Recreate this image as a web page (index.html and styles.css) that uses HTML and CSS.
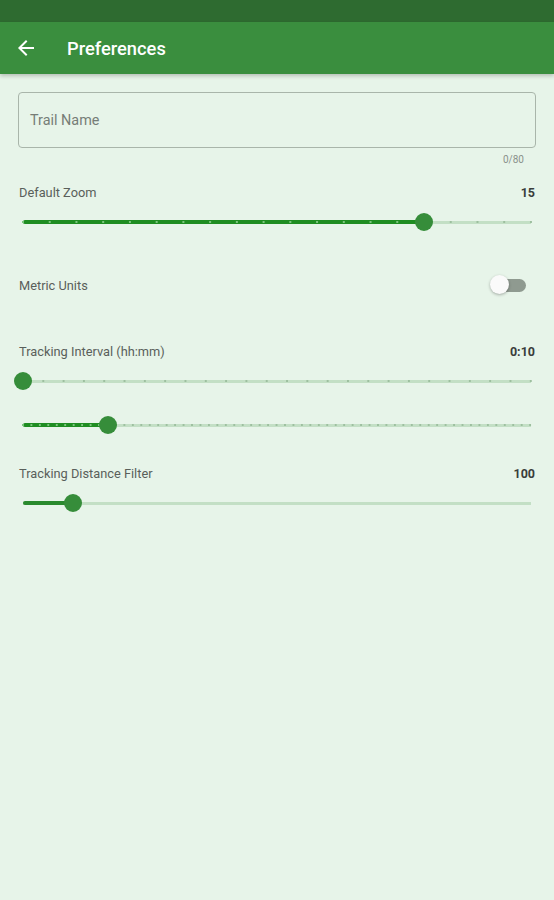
FILE: index.html
```html
<!DOCTYPE html>
<html lang="en">
<head>
<meta charset="utf-8">
<title>Preferences</title>
<link rel="stylesheet" href="styles.css">
</head>
<body>
<div class="status"></div>
<header class="appbar">
  <svg class="back" viewBox="0 0 24 24" width="24" height="24"><path d="M20 11H7.83l5.59-5.59L12 4l-8 8 8 8 1.41-1.41L7.83 13H20v-2z" fill="#fff"/></svg>
  <h1 class="title">Preferences</h1>
</header>
<main class="content">
  <div class="field"><span class="placeholder">Trail Name</span></div>
  <div class="counter">0/80</div>

  <div class="row label-row r1"><span class="label">Default Zoom</span><span class="value">15</span></div>
  <div class="slider">
    <div class="track" style="--p:78.95%; --n:19">
      <div class="inactive"></div>
      <div class="active"></div>
      <div class="ticks ticks-in"></div>
      <div class="ticks ticks-act"></div>
      <div class="thumb"></div>
    </div>
  </div>

  <div class="row switch-row"><span class="label">Metric Units</span>
    <span class="switch"><span class="switch-track"></span><span class="switch-thumb"></span></span>
  </div>

  <div class="row label-row r2"><span class="label">Tracking Interval (hh:mm)</span><span class="value">0:10</span></div>
  <div class="slider">
    <div class="track" style="--p:0%; --n:25">
      <div class="inactive"></div>
      <div class="active"></div>
      <div class="ticks ticks-in"></div>
      <div class="ticks ticks-act"></div>
      <div class="thumb"></div>
    </div>
  </div>
  <div class="slider s3">
    <div class="track" style="--p:16.67%; --n:60">
      <div class="inactive"></div>
      <div class="active"></div>
      <div class="ticks ticks-in"></div>
      <div class="ticks ticks-act"></div>
      <div class="thumb"></div>
    </div>
  </div>

  <div class="row label-row r3"><span class="label">Tracking Distance Filter</span><span class="value">100</span></div>
  <div class="slider">
    <div class="track plain" style="--p:9.84%">
      <div class="inactive"></div>
      <div class="active"></div>
      <div class="thumb"></div>
    </div>
  </div>
</main>
</body>
</html>
```
FILE: styles.css
```css
html, body {
  margin: 0;
  padding: 0;
}
body {
  background: #e7f4e9;
  font-family: Roboto, "Noto Sans", "Liberation Sans", sans-serif;
  height: 900px;
  overflow: hidden;
}
.status {
  height: 22px;
  background: #2e6b30;
}
.appbar {
  height: 52px;
  background: #3a8e3e;
  display: flex;
  align-items: center;
  box-shadow: 0 2px 4px rgba(0, 0, 0, 0.22);
  position: relative;
}
.back {
  margin-left: 14px;
  display: block;
}
.title {
  margin: 0 0 0 29px;
  color: #fff;
  font-size: 18.3px;
  font-weight: 500;
  letter-spacing: 0;
}
.content {
  padding: 18px 18px 0 18px;
  display: flex;
  flex-direction: column;
}
.field {
  height: 54px;
  border: 1px solid #a9b5aa;
  border-radius: 4px;
  display: flex;
  align-items: center;
  padding-left: 11px;
}
.placeholder {
  color: #767d77;
  font-size: 14.4px;
}
.counter {
  margin-top: 4px;
  height: 16px;
  line-height: 16px;
  text-align: right;
  padding-right: 12px;
  font-size: 10px;
  color: #8a918b;
}
.row {
  display: flex;
  justify-content: space-between;
  align-items: center;
  height: 20px;
}
.label {
  font-size: 12.8px;
  color: #5a5f5b;
  padding-left: 1px;
}
.value {
  font-size: 12.5px;
  font-weight: 700;
  color: #3a3d3b;
  padding-right: 1px;
}
.r1 { margin-top: 14px; }
.r2 { margin-top: 46px; }
.r3 { margin-top: 23px; }
.slider {
  height: 30px;
  margin-top: 5px;
  padding: 0 5px;
  display: flex;
  align-items: center;
}
.slider.s3 { margin-top: 14px; }
.track {
  position: relative;
  flex: 1;
  height: 4px;
}
.inactive {
  position: absolute;
  left: 0;
  right: 0;
  top: 0.5px;
  height: 3px;
  background: #c3dfc5;
}
.active {
  position: absolute;
  left: 0;
  top: 0;
  height: 4px;
  width: var(--p);
  background: #1f8d22;
  border-radius: 2px 0 0 2px;
}
.plain .active { background: #2a8a2e; }
.ticks {
  position: absolute;
  left: -1px;
  right: -1px;
  top: 1px;
  height: 2px;
  background-image: linear-gradient(to right, var(--tc) 0 2px, transparent 2px);
  background-size: calc((100% - 2px) / var(--n)) 100%;
  background-repeat: repeat-x;
}
.ticks-in {
  --tc: #9dbf9f;
  clip-path: inset(0 0 0 var(--p));
}
.ticks-act {
  --tc: #7cc57e;
  clip-path: inset(0 calc(100% - var(--p)) 0 0);
}
.thumb {
  position: absolute;
  left: var(--p);
  top: 50%;
  width: 18px;
  height: 18px;
  border-radius: 50%;
  background: #368d3a;
  transform: translate(-50%, -50%);
}
.switch-row { margin-top: 38px; }
.switch {
  position: relative;
  width: 36px;
  height: 20px;
  margin-right: 10px;
}
.switch-track {
  position: absolute;
  left: 3px;
  right: 0;
  top: 4px;
  height: 13px;
  border-radius: 7px;
  background: #8f9a90;
}
.switch-thumb {
  position: absolute;
  left: 0;
  top: 0;
  width: 19px;
  height: 19px;
  border-radius: 50%;
  background: #fafafa;
  box-shadow: 0 1px 3px rgba(0, 0, 0, 0.3);
}
```
